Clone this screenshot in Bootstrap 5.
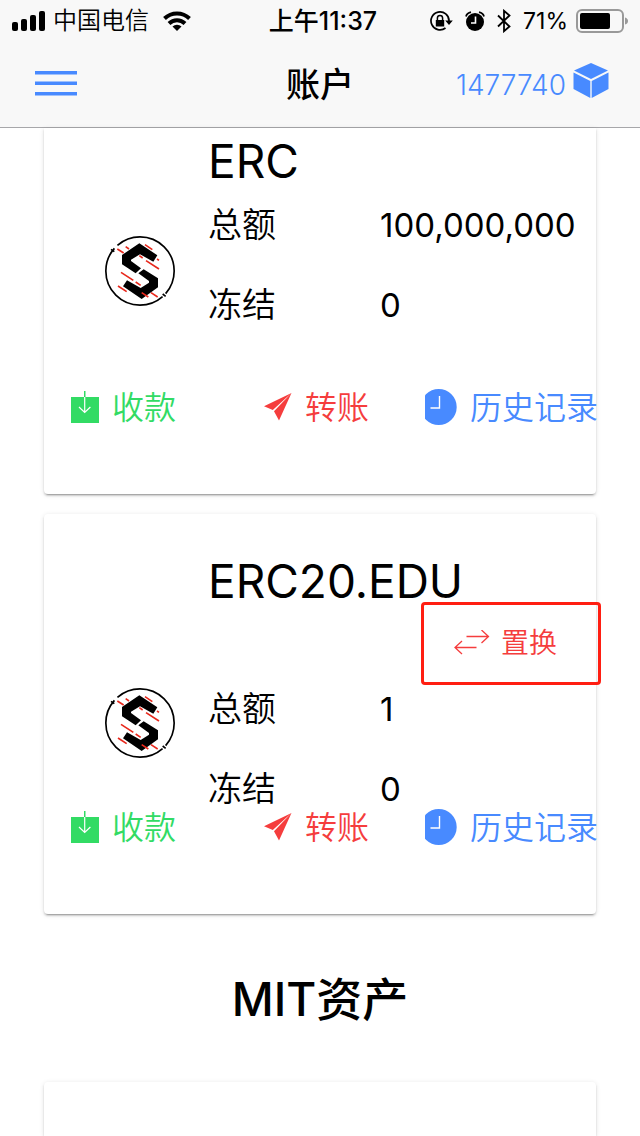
<!DOCTYPE html>
<html lang="zh-CN">
<head>
<meta charset="utf-8">
<meta name="viewport" content="width=device-width, initial-scale=1">
<title>账户</title>
<link href="https://cdn.jsdelivr.net/npm/bootstrap@5.3.0/dist/css/bootstrap.min.css" rel="stylesheet">
<style>
  :root { --blue: #488aff; --green: #32db64; --red: #f53d3d; }
  body { font-family: Inter, "Noto Sans CJK SC", sans-serif; color: #000; background: #fff; height: 100vh; }
  svg { display: block; flex-shrink: 0; }
  .side { flex: 1 1 0; }
  .topbar { background: #f8f8f8; border-bottom: 1px solid #a7a7aa; }
  .status { padding: 0 12px; font-size: 24px; line-height: 42px; }
  .carrier { gap: 14px; }
  .carrier-name { gap: 7px; font-weight: 350; }
  .status-time { font-size: 25px; font-weight: 500; padding-left: 6px; }
  .indicators { gap: 12px; }
  .status-pct { font-size: 23px; }
  .titlebar { height: 85px; padding: 0 31px; }
  .titlebar h1 { font-size: 34px; line-height: 44px; font-weight: 500; }
  .menu-btn { padding: 0 0 0 4px; }
  .block-link { color: var(--blue); font-size: 28px; line-height: 36px; gap: 7px; font-weight: 350; }
  .asset { margin: 0 44px 20px; border-radius: 4px; background: #fff; padding: 39px 20px 67px; box-shadow: 0 3px 1px -2px rgba(0,0,0,.2), 0 2px 2px 0 rgba(0,0,0,.14), 0 1px 5px 0 rgba(0,0,0,.12); }
  .asset-scrolled { padding-top: 5px; border-top-left-radius: 0; border-top-right-radius: 0; }
  .asset-last { padding: 0; margin-bottom: 0; border-bottom-left-radius: 0; border-bottom-right-radius: 0; }
  .asset-info { min-height: 256px; }
  .asset-name { font-size: 46px; line-height: 56px; font-weight: 400; margin: 0 0 17px; padding-left: 144px; }
  .asset-logo { width: 144px; padding: 12px 0 0 41px; flex-shrink: 0; }
  .swap-row { height: 64px; }
  .swap { color: var(--red); font-size: 28px; line-height: 34px; gap: 11px; padding: 0 19px 0 0; font-weight: 350; }
  .swap:hover { color: var(--red); }
  .swap-frame { position: absolute; inset: -24px -25px -25px -33px; border: 3px solid #ff1e12; border-radius: 4px; pointer-events: none; }
  .amounts { gap: 42px; font-size: 34px; line-height: 38px; min-width: 0; }
  .amounts dt { width: 172px; flex-shrink: 0; font-weight: 350; }
  .amounts dd { font-size: 33px; white-space: nowrap; overflow-x: clip; }
  .actions { display: grid; grid-template-columns: 193fr 161fr 171fr; margin: 0 -20px 0 7px; }
  .actions .btn { border: 0; border-radius: 0; padding: 0; font-size: 32px; line-height: 38px; font-weight: 350; gap: 13px; white-space: nowrap; min-width: 0; }
  .tone-green, .tone-green:hover { color: var(--green); }
  .tone-red, .tone-red:hover { color: var(--red); }
  .tone-blue, .tone-blue:hover { color: var(--blue); }
  .section-title { font-size: 46px; line-height: 60px; font-weight: 500; margin: 35px 0 53px; }
</style>
</head>
<body class="d-flex flex-column overflow-hidden">

<svg width="0" height="0" class="position-absolute" aria-hidden="true">
  <symbol id="logo" viewBox="45 33 210 210">
    <g fill="none" stroke="#000" stroke-width="5">
      <circle cx="150" cy="138" r="102.500" pathLength="100" stroke-dasharray="48 2" stroke-dashoffset="36.500"/>
      <path d="M63 73l10 7M218 207l9 7"/>
    </g>
    <path d="M148 55L202 91L190 110L150 88L123 104V108L153 130L137 145L96 118V90Z"/>
    <path d="M161 133L204 160V187L155 222L99 184L111 166L152 189L177 173V168L145 145Z"/>
    <path stroke="#e8281c" stroke-width="5" d="M82 72l19 12M107 65l10 7M165 59l22 15M148 92l10 7M201 102l6 4M168 107l39 25M93 142l37 24M137 171l15 10M84 183l26 17M155 203l20 13M183 203l20 13"/>
  </symbol>
  <symbol id="receive" viewBox="0 0 28 34">
    <path fill="currentColor" d="M0 6h13V0h1.500v6H28v26H0z"/>
    <path fill="none" stroke="#fff" stroke-width="1.200" d="M13.700 6v15.500M8 16l5.700 5.500 5.700-5.500"/>
  </symbol>
  <symbol id="send" viewBox="0 0 28 34">
    <path fill="currentColor" d="M27.500 2L0 15.200l8.800 3.700zM27.500 2L10 20.300l5 9.200z"/>
  </symbol>
  <symbol id="clock" viewBox="0 0 32 38">
    <circle cx="13.700" cy="18" r="18" fill="currentColor"/>
    <path fill="none" stroke="#fff" stroke-width="1.400" d="M14.500 7v12H5.500"/>
  </symbol>
</svg>

<header class="topbar flex-shrink-0">
  <div class="status d-flex align-items-center">
    <div class="side carrier d-flex align-items-center">
      <span class="carrier-name d-flex align-items-center"><svg width="34" height="20" viewBox="0 0 34 20"><rect y="11" width="6" height="9" rx="2"/><rect x="9" y="8" width="6" height="12" rx="2"/><rect x="18" y="4" width="6" height="16" rx="2"/><rect x="27" width="6" height="20" rx="2"/></svg>中国电信</span>
      <svg width="28" height="20" viewBox="0 0 28 20"><g fill="none" stroke="#000" stroke-width="4"><path d="M1.500 7.500A18 18 0 0 1 26.500 7.500"/><path d="M6 12.500A11.500 11.500 0 0 1 22 12.500"/></g><path d="M14 20l-4.500-4.500a6.500 6.500 0 0 1 9 0z"/></svg>
    </div>
    <span class="status-time">上午11:37</span>
    <div class="side indicators d-flex align-items-center justify-content-end">
      <svg width="23" height="20" viewBox="0 0 23 20"><path fill="none" stroke="#000" stroke-width="1.700" d="M15.500 17A9 9 0 1 1 19 10"/><path d="M15.200 9.500h7.600l-3.800 4.500zM5.800 9h8.400v6.500H5.800z"/><path fill="none" stroke="#000" stroke-width="1.500" d="M7.400 9.500V7a2.600 2.600 0 0 1 5.200 0v2.500"/></svg>
      <svg width="20" height="20" viewBox="0 0 20 20"><circle cx="10" cy="11" r="9"/><path fill="none" stroke="#000" stroke-width="1.800" d="M1 5.500Q2 2 6 1.200M19 5.500Q18 2 14 1.200"/><path fill="none" stroke="#fff" stroke-width="1.600" d="M10.500 5.500V12H6"/></svg>
      <svg width="14" height="24" viewBox="0 0 14 24"><path fill="none" stroke="#000" stroke-width="1.800" d="M1 6.500l11.500 11L7 22.200V1.800l5.500 4.700L1 17.500"/></svg>
      <span class="status-pct d-flex align-items-center gap-2">71%<svg width="52" height="24" viewBox="0 0 52 24"><rect x="1" y="1" width="46" height="22" rx="5" fill="none" stroke="#999" stroke-width="2"/><rect x="4" y="4" width="30" height="16" rx="2"/><path fill="#999" d="M49 8.500q3 1 3 3.500t-3 3.500z"/></svg></span>
    </div>
  </div>
  <nav class="titlebar d-flex align-items-center">
    <div class="side">
      <button type="button" class="btn border-0 menu-btn" aria-label="菜单"><svg width="42" height="28" viewBox="0 0 42 28" fill="#488aff"><path d="M0 0h42v3.500H0zM0 10.500h42V14H0zM0 21h42v3.500H0z"/></svg></button>
    </div>
    <h1 class="m-0">账户</h1>
    <div class="side d-flex justify-content-end">
      <a href="#" class="block-link d-flex align-items-center text-decoration-none">1477740
        <svg class="mb-2" width="36" height="36" viewBox="0 0 36 36"><path fill="#488aff" d="M18 0l17 7.500L18 16 1 7.500zM.500 9.500L17.300 18v17L.500 26zM35.500 9.500L18.700 18v17L35.500 26z"/></svg>
      </a>
    </div>
  </nav>
</header>

<main class="d-flex flex-column flex-grow-1">
  <section class="asset asset-scrolled">
    <div class="asset-info">
      <h2 class="asset-name">ERC</h2>
      <div class="d-flex align-items-center">
        <div class="asset-logo"><svg width="70" height="70"><use href="#logo"/></svg></div>
        <dl class="amounts d-flex flex-column flex-grow-1 m-0">
          <div class="d-flex"><dt>总额</dt><dd class="m-0">100,000,000</dd></div>
          <div class="d-flex"><dt>冻结</dt><dd class="m-0">0</dd></div>
        </dl>
      </div>
    </div>
    <div class="actions">
      <button type="button" class="btn tone-green d-flex align-items-center"><svg width="28" height="34"><use href="#receive"/></svg>收款</button>
      <button type="button" class="btn tone-red d-flex align-items-center"><svg width="28" height="34"><use href="#send"/></svg>转账</button>
      <button type="button" class="btn tone-blue d-flex align-items-center"><svg width="32" height="38"><use href="#clock"/></svg>历史记录</button>
    </div>
  </section>

  <section class="asset">
    <div class="asset-info">
      <h2 class="asset-name">ERC20.EDU</h2>
      <div class="d-flex align-items-center">
        <div class="asset-logo"><svg width="70" height="70"><use href="#logo"/></svg></div>
        <div class="flex-grow-1">
          <div class="swap-row d-flex justify-content-end align-items-start">
            <button type="button" class="btn border-0 swap d-flex align-items-center position-relative">
              <svg width="36" height="26" viewBox="0 0 36 26" fill="none" stroke="currentColor" stroke-width="1.300"><path d="M12.500 6.500H34.500M27.500 0l7 6.500-7 6.500M22.500 17.500H1M8 11l-7 6.500L8 24"/></svg>置换
              <span class="swap-frame"></span>
            </button>
          </div>
          <dl class="amounts d-flex flex-column m-0">
            <div class="d-flex"><dt>总额</dt><dd class="m-0">1</dd></div>
            <div class="d-flex"><dt>冻结</dt><dd class="m-0">0</dd></div>
          </dl>
        </div>
      </div>
    </div>
    <div class="actions">
      <button type="button" class="btn tone-green d-flex align-items-center"><svg width="28" height="34"><use href="#receive"/></svg>收款</button>
      <button type="button" class="btn tone-red d-flex align-items-center"><svg width="28" height="34"><use href="#send"/></svg>转账</button>
      <button type="button" class="btn tone-blue d-flex align-items-center"><svg width="32" height="38"><use href="#clock"/></svg>历史记录</button>
    </div>
  </section>

  <h2 class="section-title text-center">MIT资产</h2>
  <section class="asset asset-last flex-grow-1"></section>
</main>

<script src="https://cdn.jsdelivr.net/npm/bootstrap@5.3.0/dist/js/bootstrap.bundle.min.js"></script>
</body>
</html>
